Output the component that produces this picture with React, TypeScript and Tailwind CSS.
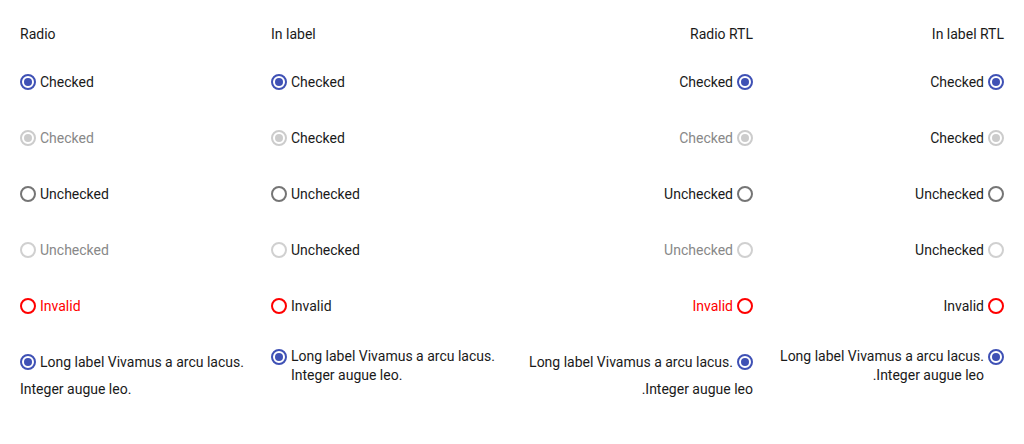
import React from 'react';

type Kind = 'checked' | 'checkedDisabled' | 'unchecked' | 'uncheckedDisabled' | 'invalid';

const ringClass: Record<Kind, string> = {
  checked: 'border-[#3f51b5]',
  checkedDisabled: 'border-[#cccccc]',
  unchecked: 'border-[#757575]',
  uncheckedDisabled: 'border-[#d0d0d0]',
  invalid: 'border-[#ff0000]',
};

const dotClass: Record<Kind, string> = {
  checked: 'bg-[#3f51b5]',
  checkedDisabled: 'bg-[#cccccc]',
  unchecked: '',
  uncheckedDisabled: '',
  invalid: '',
};

const labelText: Record<Kind, string> = {
  checked: 'Checked',
  checkedDisabled: 'Checked',
  unchecked: 'Unchecked',
  uncheckedDisabled: 'Unchecked',
  invalid: 'Invalid',
};

// label colour when the text sits beside the radio (not inside label)
const sideColor: Record<Kind, string> = {
  checked: 'text-[#1a1a1a]',
  checkedDisabled: 'text-[#888888]',
  unchecked: 'text-[#1a1a1a]',
  uncheckedDisabled: 'text-[#888888]',
  invalid: 'text-[#ff0000]',
};

const kinds: Kind[] = ['checked', 'checkedDisabled', 'unchecked', 'uncheckedDisabled', 'invalid'];

function Radio({ kind, inline, rtl }: { kind: Kind; inline?: boolean; rtl?: boolean }) {
  const isChecked = kind === 'checked' || kind === 'checkedDisabled';
  return (
    <span
      className={`${inline ? `inline-flex align-middle relative -top-px ${rtl ? 'ml-1' : 'mr-1'}` : 'flex'} w-4 h-4 shrink-0 rounded-full border-2 items-center justify-center ${ringClass[kind]}`}
    >
      {isChecked && <span className={`block w-2 h-2 rounded-full ${dotClass[kind]}`} />}
    </span>
  );
}

function Column({ title, rtl, inLabel }: { title: string; rtl?: boolean; inLabel?: boolean }) {
  return (
    <div dir={rtl ? 'rtl' : 'ltr'}>
      <div className="h-5 leading-5 mt-px mb-[10px] text-[#1a1a1a]">{title}</div>
      {kinds.map((k) => (
        <div key={k} className="h-14 flex items-center gap-1">
          <Radio kind={k} />
          <span className={inLabel ? 'text-[#1a1a1a]' : sideColor[k]}>{labelText[k]}</span>
        </div>
      ))}
      {inLabel ? (
        <div className="flex items-start gap-1 pt-[13px] leading-[19px] text-[#1a1a1a]">
          <span className="mt-0.5">
            <Radio kind="checked" />
          </span>
          <span>Long label Vivamus a arcu lacus. Integer augue leo.</span>
        </div>
      ) : (
        <div className="pt-[15px] leading-[27px] text-[#1a1a1a]">
          <Radio kind="checked" inline rtl={rtl} />
          Long label Vivamus a arcu lacus. Integer augue leo.
        </div>
      )}
    </div>
  );
}

export default function App() {
  return (
    <div className="w-[1024px] h-[444px] bg-white font-['Roboto',sans-serif] text-sm">
      <div className="grid grid-cols-4 gap-x-5 px-5 pt-[23px]">
        <Column title="Radio" />
        <Column title="In label" inLabel />
        <Column title="Radio RTL" rtl />
        <Column title="In label RTL" rtl inLabel />
      </div>
    </div>
  );
}
